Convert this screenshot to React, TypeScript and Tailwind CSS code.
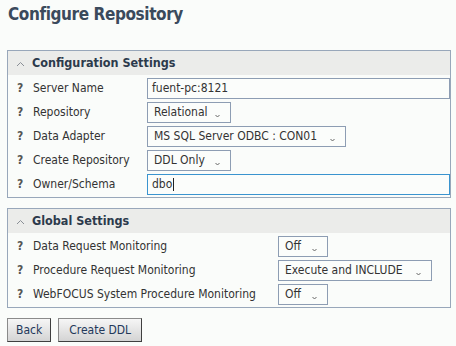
import React from "react";

const font = { fontFamily: '"DejaVu Sans Condensed", "DejaVu Sans", sans-serif' };

const Caret = () => (
  <svg width="5" height="4" viewBox="0 0 5 4" className="ml-auto mt-[8px] shrink-0">
    <path d="M0.5 1 L2.5 3 L4.5 1" fill="none" stroke="#666" strokeWidth="1" />
  </svg>
);

const Select = ({ value, width }: { value: string; width: string }) => (
  <div
    className={`flex items-center h-[21px] ${width} border border-[#8d9db3] bg-[#fbfdfb] pl-[6px] pr-[10px] text-[12px] text-[#333]`}
  >
    <span>{value}</span>
    <Caret />
  </div>
);

const Input = ({ value, focused }: { value: string; focused?: boolean }) => (
  <div
    className={`flex-1 flex items-center h-[21px] border ${
      focused ? "border-[#3a94cf]" : "border-[#8d9db3]"
    } bg-[#fbfdfb] px-[4px] text-[12px] text-[#333]`}
  >
    {value}
    {focused && <span className="w-px h-[13px] bg-[#222] ml-px" />}
  </div>
);

const Header = ({ title }: { title: string }) => (
  <div className="flex items-center h-[24px] bg-[#ebecea] pl-[8px]">
    <svg width="9" height="6" viewBox="0 0 9 6" className="mr-[7px] mt-[1px]">
      <path d="M1 5 L4.5 1.5 L8 5" fill="none" stroke="#8a8f96" strokeWidth="1" />
    </svg>
    <span className="text-[12.5px] font-bold text-[#2c3a4c]">{title}</span>
  </div>
);

const Row = ({
  label,
  labelWidth,
  children,
}: {
  label: string;
  labelWidth: string;
  children: React.ReactNode;
}) => (
  <div className="flex items-center h-[24px]">
    <div className={`flex items-center ${labelWidth} shrink-0 pl-[9px] text-[12px] text-[#333]`}>
      <span className="font-bold text-[#555] w-[16px]">?</span>
      <span>{label}</span>
    </div>
    {children}
  </div>
);

export default function App() {
  return (
    <div className="w-[456px] h-[346px] bg-[#fafcfa] overflow-hidden" style={font}>
      <h1 className="pl-[8px] pt-[2px] h-[50px] text-[17px] tracking-[-0.4px] font-bold text-[#3b4a5c]">
        Configure Repository
      </h1>

      <div className="ml-[7px] w-[444px] border border-[#98a7ba] pb-[1px]">
        <Header title="Configuration Settings" />
        <div className="pt-[1px]">
          <Row label="Server Name" labelWidth="w-[139px]">
            <Input value="fuent-pc:8121" />
          </Row>
          <Row label="Repository" labelWidth="w-[139px]">
            <Select value="Relational" width="w-[84px]" />
          </Row>
          <Row label="Data Adapter" labelWidth="w-[139px]">
            <Select value="MS SQL Server ODBC : CON01" width="w-[199px]" />
          </Row>
          <Row label="Create Repository" labelWidth="w-[139px]">
            <Select value="DDL Only" width="w-[84px]" />
          </Row>
          <Row label="Owner/Schema" labelWidth="w-[139px]">
            <Input value="dbo" focused />
          </Row>
        </div>
      </div>

      <div className="ml-[7px] mt-[10px] w-[444px] border border-[#98a7ba] pb-[1px]">
        <Header title="Global Settings" />
        <div className="pt-[1px]">
          <Row label="Data Request Monitoring" labelWidth="w-[270px]">
            <Select value="Off" width="w-[50px]" />
          </Row>
          <Row label="Procedure Request Monitoring" labelWidth="w-[270px]">
            <Select value="Execute and INCLUDE" width="w-[154px]" />
          </Row>
          <Row label="WebFOCUS System Procedure Monitoring" labelWidth="w-[270px]">
            <Select value="Off" width="w-[50px]" />
          </Row>
        </div>
      </div>

      <div className="flex gap-[7px] ml-[7px] mt-[10px]">
        <button className="h-[24px] px-[8px] border border-[#8a8a8a] border-r-[#3f3f3f] border-b-[#3f3f3f] bg-gradient-to-b from-[#f6f6f6] to-[#d4d4d4] text-[12px] text-[#23385a]">
          Back
        </button>
        <button className="h-[24px] px-[10px] border border-[#8a8a8a] border-r-[#3f3f3f] border-b-[#3f3f3f] bg-gradient-to-b from-[#f6f6f6] to-[#d4d4d4] text-[12px] text-[#23385a]">
          Create DDL
        </button>
      </div>
    </div>
  );
}
